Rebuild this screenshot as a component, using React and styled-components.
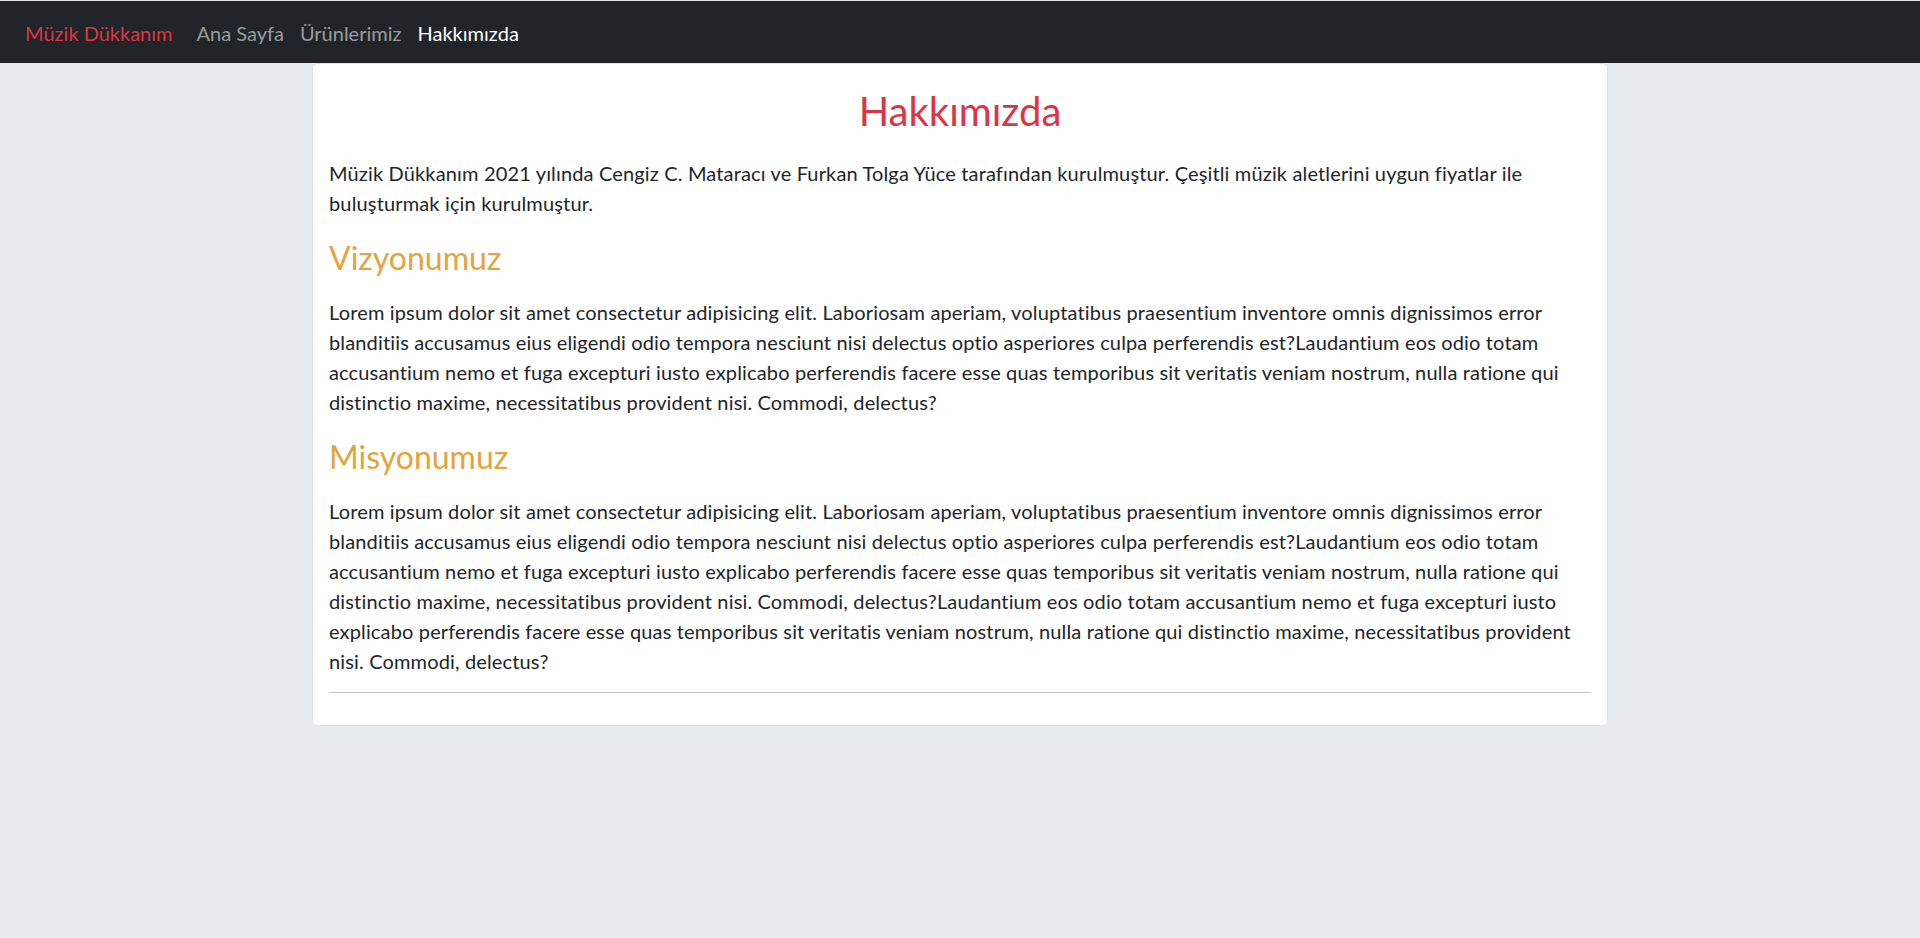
import React from 'react'
import styled, { createGlobalStyle } from 'styled-components'

const GlobalStyle = createGlobalStyle`
	* {
		box-sizing: border-box;
	}
	body {
		margin: 0;
		background-color: #e9ecef;
		font-family: Lato, 'Noto Sans', sans-serif;
		color: #212529;
	}
`

const vision =
	'Lorem ipsum dolor sit amet consectetur adipisicing elit. Laboriosam aperiam, voluptatibus praesentium inventore omnis dignissimos error blanditiis accusamus eius eligendi odio tempora nesciunt nisi delectus optio asperiores culpa perferendis est?Laudantium eos odio totam accusantium nemo et fuga excepturi iusto explicabo perferendis facere esse quas temporibus sit veritatis veniam nostrum, nulla ratione qui distinctio maxime, necessitatibus provident nisi. Commodi, delectus?'

const mission =
	vision +
	'Laudantium eos odio totam accusantium nemo et fuga excepturi iusto explicabo perferendis facere esse quas temporibus sit veritatis veniam nostrum, nulla ratione qui distinctio maxime, necessitatibus provident nisi. Commodi, delectus?'

const links = [
	{ label: 'Ana Sayfa', active: false },
	{ label: 'Ürünlerimiz', active: false },
	{ label: 'Hakkımızda', active: true },
]

const App = () => {
	return (
		<>
			<GlobalStyle />
			<Navbar>
				<Brand href='#'>Müzik Dükkanım</Brand>
				<NavList>
					{links.map((l) => (
						<NavLink key={l.label} href='#' $active={l.active}>
							{l.label}
						</NavLink>
					))}
				</NavList>
			</Navbar>
			<Main>
				<Card>
					<Title>Hakkımızda</Title>
					<Paragraph>
						Müzik Dükkanım 2021 yılında Cengiz C. Mataracı ve Furkan Tolga Yüce
						tarafından kurulmuştur. Çeşitli müzik aletlerini uygun fiyatlar ile
						buluşturmak için kurulmuştur.
					</Paragraph>
					<SubTitle>Vizyonumuz</SubTitle>
					<Paragraph>{vision}</Paragraph>
					<SubTitle>Misyonumuz</SubTitle>
					<Paragraph>{mission}</Paragraph>
					<Divider />
				</Card>
			</Main>
		</>
	)
}

const Navbar = styled.nav`
	display: flex;
	align-items: center;
	height: 63px;
	padding: 1px 25px 0;
	background-color: #212529;
	border-top: 1px solid #dfe2e5;
`

const Brand = styled.a`
	font-size: 20px;
	line-height: 30px;
	color: #dc3545;
	text-decoration: none;
	margin-right: 16px;
`

const NavList = styled.div`
	display: flex;
	align-items: center;
`

const NavLink = styled.a`
	font-size: 20px;
	line-height: 30px;
	padding: 0 8px;
	text-decoration: none;
	color: ${(p) => (p.$active ? '#ffffff' : 'rgba(255, 255, 255, 0.55)')};
`

const Main = styled.main`
	width: 1296px;
	margin: 0 auto;
`

const Card = styled.section`
	background-color: #fff;
	border: 1px solid rgba(0, 0, 0, 0.125);
	border-radius: 5px;
	padding: 16px;
`

const Title = styled.h1`
	margin: 7px 0 23px;
	font-size: 40px;
	line-height: 48px;
	font-weight: 400;
	text-align: center;
	color: #dc3545;
`

const SubTitle = styled.h2`
	margin: 0 0 20px;
	font-size: 32px;
	line-height: 38px;
	font-weight: 400;
	color: #e5a33b;
`

const Paragraph = styled.p`
	margin: 0 0 21px;
	font-size: 20px;
	line-height: 30px;
	letter-spacing: 0.15px;
	&:last-of-type {
		margin-bottom: 16px;
	}
`

const Divider = styled.hr`
	margin: 0 0 16px;
	border: 0;
	border-top: 1px solid #c8c8c8;
`

export default App
